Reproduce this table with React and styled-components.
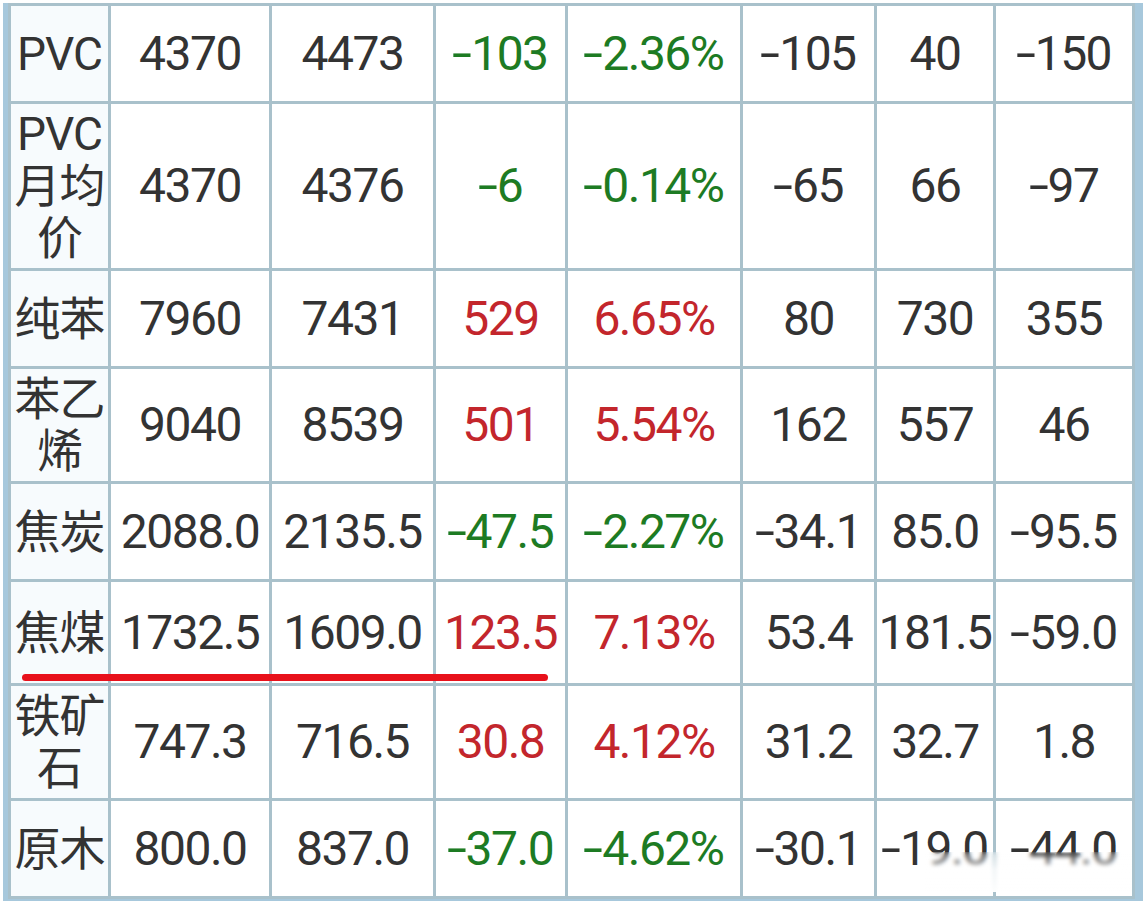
import React from "react";
import styled, { createGlobalStyle } from "styled-components";

const GlobalStyle = createGlobalStyle`
  html, body {
    margin: 0;
    padding: 0;
    background: #ffffff;
    overflow: hidden;
  }
  body {
    font-family: Roboto, "Noto Sans CJK SC", sans-serif;
  }
`;

const rows = [
  { name: ["PVC"], values: ["4370", "4473", "-103", "-2.36%", "-105", "40", "-150"] },
  { name: ["PVC", "月均", "价"], values: ["4370", "4376", "-6", "-0.14%", "-65", "66", "-97"] },
  { name: ["纯苯"], values: ["7960", "7431", "529", "6.65%", "80", "730", "355"] },
  { name: ["苯乙", "烯"], values: ["9040", "8539", "501", "5.54%", "162", "557", "46"] },
  { name: ["焦炭"], values: ["2088.0", "2135.5", "-47.5", "-2.27%", "-34.1", "85.0", "-95.5"] },
  { name: ["焦煤"], tall: true, values: ["1732.5", "1609.0", "123.5", "7.13%", "53.4", "181.5", "-59.0"] },
  { name: ["铁矿", "石"], values: ["747.3", "716.5", "30.8", "4.12%", "31.2", "32.7", "1.8"] },
  { name: ["原木"], values: ["800.0", "837.0", "-37.0", "-4.62%", "-30.1", "-19.0", "-44.0"] },
];

// columns 2 and 3 (change, change %) get coloured by sign
const toneOf = (value, index) => {
  if (index !== 2 && index !== 3) return "plain";
  return value.startsWith("-") ? "down" : "up";
};

// the screenshot's font draws a wider minus than Roboto's hyphen
const Value = ({ text }) =>
  text.startsWith("-") ? (
    <>
      <Minus>-</Minus>
      {text.slice(1)}
    </>
  ) : (
    text
  );

const App = () => {
  return (
    <>
      <GlobalStyle />
      <Page>
        <Frame>
          <Grid>
            {rows.map((row) => (
              <React.Fragment key={row.name.join("")}>
                <NameCell $tall={row.tall}>
                  {row.name.map((line) => (
                    <span key={line}>{line}</span>
                  ))}
                </NameCell>
                {row.values.map((value, i) => (
                  <Cell key={i} $tone={toneOf(value, i)} $tall={row.tall}>
                    <Value text={value} />
                  </Cell>
                ))}
              </React.Fragment>
            ))}
          </Grid>
        </Frame>
        <Underline />
        <Watermark />
      </Page>
    </>
  );
};

const Page = styled.div`
  position: relative;
  padding-top: 3px;
  padding-left: 3px;
  width: 1145px;
  height: 901px;
  box-sizing: border-box;
`;

const Frame = styled.div`
  display: inline-block;
  border-left: 5px solid #a7c8dc;
  border-right: 8px solid #a7c8dc;
  border-bottom: 6px solid #a7c8dc;
`;

const Grid = styled.div`
  display: grid;
  grid-template-columns: 97px 158px 161px 129px 172px 131px 116px 136px;
  gap: 3px;
  padding: 3px;
  background: #a9c1cb;
`;

const Cell = styled.div`
  display: flex;
  align-items: center;
  justify-content: center;
  min-height: ${({ $tall }) => ($tall ? "101px" : "95px")};
  padding: 4px 0;
  box-sizing: border-box;
  background: #ffffff;
  font-family: Roboto, "Noto Sans CJK SC", sans-serif;
  font-weight: 400;
  font-size: 48px;
  line-height: 52px;
  letter-spacing: -1.5px;
  white-space: nowrap;
  color: ${({ $tone }) =>
    $tone === "up" ? "#c3262c" : $tone === "down" ? "#1d7b23" : "#333333"};
`;

const Minus = styled.span`
  display: inline-block;
  transform: scaleX(1.5);
  margin: 0 4px 0 2px;
`;

const NameCell = styled.div`
  display: flex;
  flex-direction: column;
  align-items: center;
  justify-content: center;
  min-height: ${({ $tall }) => ($tall ? "101px" : "95px")};
  padding: 4px 0;
  box-sizing: border-box;
  background: #f7fbfd;
  font-family: Roboto, "Noto Sans CJK SC", sans-serif;
  font-size: 46px;
  line-height: 52px;
  letter-spacing: -1px;
  color: #333333;
  white-space: nowrap;
`;

const Underline = styled.div`
  position: absolute;
  left: 22px;
  top: 674px;
  width: 526px;
  height: 7px;
  border-radius: 4px;
  background: #e8111b;
`;

const Watermark = styled.div`
  position: absolute;
  left: 925px;
  top: 852px;
  width: 207px;
  height: 40px;
  backdrop-filter: blur(2px);
  background: linear-gradient(
    to bottom,
    rgba(255, 255, 255, 0) 0%,
    rgba(255, 255, 255, 0.75) 45%,
    rgba(255, 255, 255, 0.95) 100%
  );
`;

export default App;
